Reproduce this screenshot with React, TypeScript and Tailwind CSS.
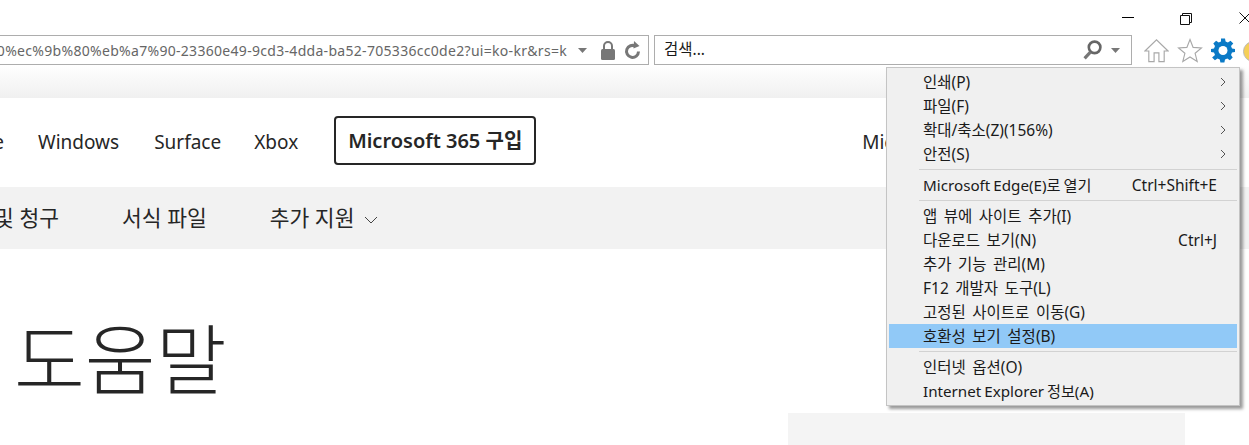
import React from "react";

const uiFont = "font-['Noto_Sans','Noto_Sans_CJK_KR',sans-serif]";

interface MenuItem {
  label: string;
  shortcut?: string;
  arrow?: boolean;
  active?: boolean;
  latin?: boolean;
}

const menuGroups: MenuItem[][] = [
  [
    { label: "인쇄(P)", arrow: true },
    { label: "파일(F)", arrow: true },
    { label: "확대/축소(Z)(156%)", arrow: true },
    { label: "안전(S)", arrow: true },
  ],
  [{ label: "Microsoft Edge(E)로 열기", shortcut: "Ctrl+Shift+E", latin: true }],
  [
    { label: "앱 뷰에 사이트 추가(I)" },
    { label: "다운로드 보기(N)", shortcut: "Ctrl+J" },
    { label: "추가 기능 관리(M)" },
    { label: "F12 개발자 도구(L)" },
    { label: "고정된 사이트로 이동(G)" },
    { label: "호환성 보기 설정(B)", active: true },
  ],
  [{ label: "인터넷 옵션(O)" }, { label: "Internet Explorer 정보(A)", latin: true }],
];

const ToolsMenu = () => (
  <div className="absolute left-[886px] top-[67px] w-[354px] h-[339px] bg-[#f0f0f0] border border-[#c4c4c4] shadow-[3px_3px_3px_rgba(0,0,0,0.4)] pt-[2px] pl-[2px] pr-[2px]">
    {menuGroups.map((group, i) => (
      <div key={i}>
        {i > 0 && <div className="ml-[30px] h-px bg-[#d2d2d2] mt-[3px] mb-[3px]" />}
        {group.map((item) => (
          <div
            key={item.label}
            className={`h-6 flex items-center pl-[34px] pr-[20px] text-[#1a1a1a] ${item.active ? "bg-[#91c9f7]" : ""}`}
          >
            <span
              className={`flex-1 whitespace-nowrap pt-[1px] ${item.latin ? "text-[15.2px] [word-spacing:-1px]" : "text-[15.5px] [word-spacing:2.5px]"}`}
            >
              {item.label}
            </span>
            {item.shortcut && <span className="whitespace-nowrap text-[15.5px] pt-[1px]">{item.shortcut}</span>}
            {item.arrow && (
              <svg width="6" height="10" viewBox="0 0 6 10" className="-mr-[9px]">
                <path d="M1 1l4 4-4 4" fill="none" stroke="#555" strokeWidth="1" />
              </svg>
            )}
          </div>
        ))}
      </div>
    ))}
  </div>
);

const Caret = () => (
  <svg width="9" height="5" viewBox="0 0 9 5">
    <path d="M0 0h9L4.500 5z" fill="#777" />
  </svg>
);

const Toolbar = () => (
  <div className="h-[30px] flex items-stretch">
    {/* address bar */}
    <div className="w-[649px] shrink-0 border border-l-0 border-[#adadad] flex items-center">
      <div className="flex-1 min-w-0 overflow-hidden flex justify-end">
        <span className="whitespace-nowrap text-[14px] tracking-[0.3px] text-[#666]">
          support.microsoft.com/ko-kr/office/%eb%8f%84%ec%9b%80%eb%a7%90-%ec%9b%80%ec%9b%80%ec%9b%80%ec%9b%80%ec%9b%80%ec%9b%80%ec%9b%80%eb%a7%90-23360e49-9cd3-4dda-ba52-705336cc0de2?ui=ko-kr&rs=k
        </span>
      </div>
      <div className="ml-[11px] mr-[13px] flex">
        <Caret />
      </div>
      <svg width="16" height="19" viewBox="0 0 16 19" className="mr-[8px]">
        <path d="M4 8V5a4 4 0 018 0v3" fill="none" stroke="#777" strokeWidth="2" />
        <rect x="1" y="8" width="14" height="11" rx="1.500" fill="#777" />
      </svg>
      <svg width="17" height="19" viewBox="0 0 17 19" className="mr-[7px]">
        <path d="M11.500 5.200A6 6 0 1014.500 10.500" fill="none" stroke="#777" strokeWidth="3" />
        <path d="M10 0l5.500 5-6 2.500z" fill="#777" />
      </svg>
    </div>
    {/* search box */}
    <div className="ml-[5px] w-[478px] shrink-0 border border-[#adadad] flex items-center pl-[9px] text-[15.5px] text-[#1a1a1a]">
      <span className="flex-1">검색...</span>
      <svg width="19" height="20" viewBox="0 0 18 19" className="mr-[9px]">
        <circle cx="11" cy="7" r="5.500" fill="none" stroke="#666" strokeWidth="2.500" />
        <path d="M7 11.500L1.500 17.500" stroke="#777" strokeWidth="3" />
      </svg>
      <div className="mr-[11px] flex">
        <Caret />
      </div>
    </div>
    {/* home, favourites, tools */}
    <div className="ml-[12px] flex items-center shrink-0">
      <svg width="25" height="25" viewBox="0 0 26 25" className="shrink-0">
        <path
          d="M1 13L13 1.500 25 13h-4v11h-5.500v-9h-5v9H5V13z"
          fill="#fff"
          stroke="#a8a8a8"
          strokeWidth="1.200"
        />
      </svg>
      <svg width="26" height="25" viewBox="0 0 24 24" className="ml-[8px] shrink-0">
        <path
          d="M12 1.500l3 7.500 8 .6-6.100 5.100 2 7.800L12 18.200 5.100 22.500l2-7.800L1 9.600 9 9z"
          fill="#fff"
          stroke="#a8a8a8"
          strokeWidth="1.100"
        />
      </svg>
      <svg width="24" height="25" viewBox="0 0 24 24" className="ml-[8px] shrink-0">
        <path
          d="M10 0h4l.6 3 2.300 1 2.600-1.700 2.800 2.800L20 7.600l1 2.300 3 .6v3l-3 .6-1 2.300 1.700 2.500-2.800 2.800-2.600-1.700-2.300 1-.6 3h-4l-.6-3-2.300-1-2.600 1.700-2.800-2.800L4 16.400l-1-2.300-3-.6v-3l3-.6 1-2.300-1.700-2.500 2.800-2.800L7.700 4l2.300-1z"
          fill="#0b7ac6"
        />
        <circle cx="12" cy="12" r="4.500" fill="#fff" />
      </svg>
      <div className="ml-[8px] mt-[3px] w-[21px] h-[21px] rounded-full bg-[#f5cf57] border border-[#b9b9b9] shrink-0" />
    </div>
  </div>
);

export default function App() {
  return (
    <div className={`w-[1249px] h-[445px] overflow-hidden bg-white relative ${uiFont}`}>
      {/* window controls */}
      <div className="h-[35px] flex items-center justify-end">
        <div className="w-[12px] h-px bg-black mr-[46px]" />
        <svg width="12" height="12" viewBox="0 0 12 12" className="mr-[47px] mt-[2px]">
          <path d="M.5 2.500h9v9h-9z M2.500 2.500v-2h9v9h-2" fill="none" stroke="#111" strokeWidth="1" />
        </svg>
        <svg width="12" height="12" viewBox="0 0 12 12" className="-mr-[2px] mt-[1px] shrink-0">
          <path d="M.5.5l11 11M11.500.5l-11 11" stroke="#111" strokeWidth="1" />
        </svg>
      </div>
      <Toolbar />
      <div className="h-[33px] bg-gradient-to-b from-white to-[#f0f0f0]" />

      {/* site nav */}
      <nav className="h-[89px] flex items-center text-[19px] text-[#262626] whitespace-nowrap">
        <span className="w-[4px] overflow-hidden flex justify-end shrink-0">
          <span>e</span>
        </span>
        <span className="ml-[34px]">Windows</span>
        <span className="ml-[35px]">Surface</span>
        <span className="ml-[33px]">Xbox</span>
        <span className="ml-[36px] mb-[4px] w-[202px] h-[49px] border-2 border-[#262626] rounded-[4px] flex items-center justify-center font-semibold text-[20px]">
          Microsoft 365 구입
        </span>
        <span className="ml-[326px]">Microsoft</span>
      </nav>

      {/* sub nav */}
      <div className="h-[62px] bg-[#f2f2f2] flex items-center text-[21.5px] text-[#262626] whitespace-nowrap">
        <span className="w-[59px] overflow-hidden flex justify-end shrink-0">
          <span>지불 및 청구</span>
        </span>
        <span className="ml-[63px]">서식 파일</span>
        <span className="ml-[63px]">추가 지원</span>
        <svg width="14" height="8" viewBox="0 0 14 8" className="ml-[10px] mt-[3px]">
          <path d="M1 1l6 6 6-6" fill="none" stroke="#444" strokeWidth="1" />
        </svg>
      </div>

      {/* page body */}
      <div className="flex">
        <h1 className="ml-[14px] mt-[71px] text-[77px] leading-[80px] font-light text-[#262626] whitespace-nowrap">도움말</h1>
        <div className="ml-auto mr-[64px] mt-[164px] w-[397px] h-[40px] bg-[#f4f4f4] shrink-0" />
      </div>

      <ToolsMenu />
    </div>
  );
}
